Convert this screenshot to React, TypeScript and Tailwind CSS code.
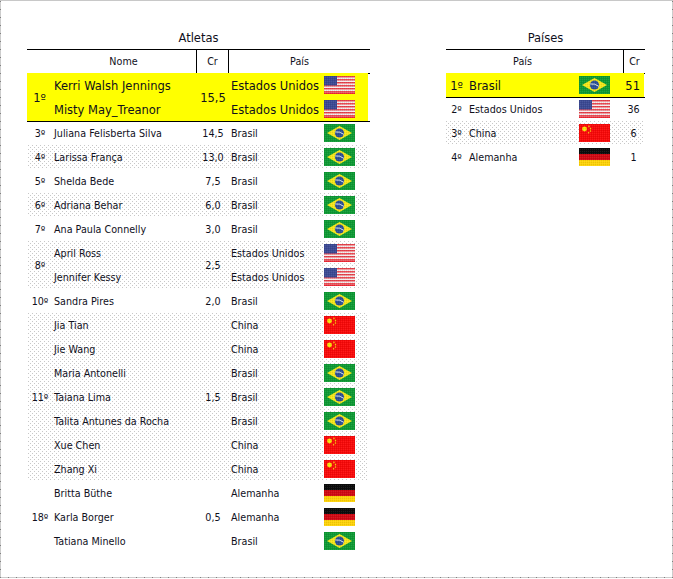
const dots =
  "bg-[conic-gradient(from_270deg_at_1px_1px,#c8c8c8_25%,transparent_0),conic-gradient(from_270deg_at_1px_1px,#c8c8c8_25%,transparent_0)] bg-[length:4px_4px] bg-[position:0_0,2px_2px]";

type Flag = "us" | "br" | "cn" | "de";

function FlagIcon({ code }: { code: Flag }) {
  const dither = (
    <>
      <pattern id={"d-" + code} width="2" height="2" patternUnits="userSpaceOnUse">
        <rect width="1" height="1" fill="#000" fillOpacity="0.08" />
        <rect x="1" y="1" width="1" height="1" fill="#fff" fillOpacity="0.08" />
      </pattern>
      <rect width="31" height="18" fill={`url(#d-${code})`} />
    </>
  );
  if (code === "us") {
    return (
      <svg width="31" height="18" viewBox="0 0 31 18" className="block">
        <rect width="31" height="18" fill="#f4eeee" />
        {[0, 3, 6, 9, 12, 15].map((y) => (
          <rect key={y} y={y} width="31" height="1.5" fill="#e8434c" />
        ))}
        <rect y="16.6" width="31" height="1.4" fill="#e8202c" />
        <rect width="13" height="9.5" fill="#3c4a94" />
        {dither}
      </svg>
    );
  }
  if (code === "br") {
    return (
      <svg width="31" height="18" viewBox="0 0 31 18" className="block">
        <rect width="31" height="18" fill="#0f9a35" />
        <polygon points="15.5,2 28,9 15.5,16 3,9" fill="#f6e71a" />
        <circle cx="15.5" cy="9" r="4.6" fill="#2c4f96" />
        <path d="M11.2 8 Q16 7.2 19.8 10.4" stroke="#dfe6e8" strokeWidth="1" fill="none" />
        {dither}
      </svg>
    );
  }
  if (code === "cn") {
    return (
      <svg width="31" height="18" viewBox="0 0 31 18" className="block">
        <rect width="31" height="18" fill="#f80a0a" />
        <circle cx="5.5" cy="5" r="2.4" fill="#f7e40c" />
        <circle cx="10" cy="2.4" r="0.8" fill="#f5c80c" />
        <circle cx="11.5" cy="4.6" r="0.8" fill="#f5c80c" />
        <circle cx="11.5" cy="7" r="0.8" fill="#f5c80c" />
        <circle cx="9.6" cy="8.8" r="0.8" fill="#f5c80c" />
        {dither}
      </svg>
    );
  }
  return (
    <svg width="31" height="18" viewBox="0 0 31 18" className="block">
      <rect width="31" height="6" fill="#0c0c0c" />
      <rect y="6" width="31" height="6" fill="#d00a14" />
      <rect y="12" width="31" height="6" fill="#fdd20a" />
      {dither}
    </svg>
  );
}

const atletas = [
  { rank: "3º", cr: "14,5", rows: [["Juliana Felisberta Silva", "Brasil", "br"]] },
  { rank: "4º", cr: "13,0", dotted: true, rows: [["Larissa França", "Brasil", "br"]] },
  { rank: "5º", cr: "7,5", rows: [["Shelda Bede", "Brasil", "br"]] },
  { rank: "6º", cr: "6,0", dotted: true, rows: [["Adriana Behar", "Brasil", "br"]] },
  { rank: "7º", cr: "3,0", rows: [["Ana Paula Connelly", "Brasil", "br"]] },
  {
    rank: "8º",
    cr: "2,5",
    dotted: true,
    rows: [
      ["April Ross", "Estados Unidos", "us"],
      ["Jennifer Kessy", "Estados Unidos", "us"],
    ],
  },
  { rank: "10º", cr: "2,0", rows: [["Sandra Pires", "Brasil", "br"]] },
  {
    rank: "11º",
    cr: "1,5",
    dotted: true,
    rows: [
      ["Jia Tian", "China", "cn"],
      ["Jie Wang", "China", "cn"],
      ["Maria Antonelli", "Brasil", "br"],
      ["Taiana Lima", "Brasil", "br"],
      ["Talita Antunes da Rocha", "Brasil", "br"],
      ["Xue Chen", "China", "cn"],
      ["Zhang Xi", "China", "cn"],
    ],
  },
  {
    rank: "18º",
    cr: "0,5",
    rows: [
      ["Britta Büthe", "Alemanha", "de"],
      ["Karla Borger", "Alemanha", "de"],
      ["Tatiana Minello", "Brasil", "br"],
    ],
  },
];

const paises = [
  { rank: "2º", name: "Estados Unidos", flag: "us", cr: "36" },
  { rank: "3º", name: "China", flag: "cn", cr: "6", dotted: true },
  { rank: "4º", name: "Alemanha", flag: "de", cr: "1" },
];

function AtletaGroup({ group, big }: { group: any; big?: boolean }) {
  const n = group.rows.length;
  const nudge = big ? "pt-[3px]" : "pt-[2px]";
  return (
    <div
      className={
        (big ? "grid-cols-[27px_143px_32px_95px_44px] " : "grid-cols-[26px_143px_32px_95px_43px] ") +
        "grid auto-rows-[24px] items-center " +
        (group.dotted ? dots : "")
      }
    >
      <div className={"text-center pr-[2px] " + nudge} style={{ gridRow: `span ${n}` }}>
        {group.rank}
      </div>
      {group.rows.map((r: string[], i: number) => (
        <div key={i} className="contents">
          <div className={"whitespace-nowrap " + nudge} style={{ gridColumn: 2 }}>
            {r[0]}
          </div>
          {i === 0 && (
            <div className={"text-center " + nudge} style={{ gridRow: `span ${n}`, gridColumn: 3 }}>
              {group.cr}
            </div>
          )}
          <div className={"whitespace-nowrap pl-[2px] " + nudge} style={{ gridColumn: 4 }}>
            {r[1]}
          </div>
          <div style={{ gridColumn: 5 }}>
            <FlagIcon code={r[2] as Flag} />
          </div>
        </div>
      ))}
    </div>
  );
}

export default function App() {
  return (
    <div className="w-[673px] h-[578px] bg-white text-[#10101c] font-['DejaVu_Sans',sans-serif] text-[9.6px] overflow-hidden pl-[27px] pt-[28px] bg-no-repeat bg-[linear-gradient(#c8c8c8,#c8c8c8),repeating-linear-gradient(180deg,#cccccc_0_1px,#808080_1px_2px,#cccccc_2px_8px),repeating-linear-gradient(180deg,#cccccc_0_1px,#808080_1px_2px,#cccccc_2px_8px),repeating-linear-gradient(90deg,#808080_0_1px,#cccccc_1px_8px)] bg-[length:100%_1px,1px_100%,1px_100%,100%_1px] bg-[position:0_0,0_0,100%_0,0_100%]">
      <div className="flex">
        {/* Atletas */}
        <div className="w-[343px]">
          <h2 className="h-[21px] text-center text-[11.5px] font-normal leading-[20px]">Atletas</h2>
          <div className="grid grid-cols-[170px_32px_141px] h-[24px] border-t border-black items-center text-center">
            <div className="border-r border-black h-full leading-[23px] pl-[24px]">Nome</div>
            <div className="border-r border-black h-full leading-[23px]">Cr</div>
            <div className="h-full leading-[23px]">País</div>
          </div>
          <div className="h-[49px] border-t border-b border-black">
            <div className="-mt-px w-[341px] h-[48px] bg-[#ffff00] text-[11.5px]">
              <AtletaGroup
                big
                group={{
                  rank: "1º",
                  cr: "15,5",
                  rows: [
                    ["Kerri Walsh Jennings", "Estados Unidos", "us"],
                    ["Misty May_Treanor", "Estados Unidos", "us"],
                  ],
                }}
              />
            </div>
          </div>
          <div className="-mt-px ml-px w-[339px]">
            {atletas.map((g) => (
              <AtletaGroup key={g.rank} group={g} />
            ))}
          </div>
        </div>

        {/* Países */}
        <div className="w-[199px] ml-[76px]">
          <h2 className="h-[21px] text-center text-[11.5px] font-normal leading-[20px]">Países</h2>
          <div className="grid grid-cols-[178px_21px] h-[24px] border-t border-black text-center">
            <div className="border-r border-black leading-[23px] pr-[24px]">País</div>
            <div className="leading-[23px]">Cr</div>
          </div>
          <div className="h-[25px] border-t border-b border-black">
            <div className="-mt-px w-[198px] bg-[#ffff00] text-[11.5px] grid grid-cols-[23px_110px_44px_21px] h-[24px] items-center">
              <div className="text-center pr-[2px] pt-[3px]">1º</div>
              <div className="pt-[3px]">Brasil</div>
              <FlagIcon code="br" />
              <div className="text-right pr-[4px] pt-[3px]">51</div>
            </div>
          </div>
          <div className="-mt-px">
            {paises.map((p) => (
              <div
                key={p.rank}
                className={"w-[198px] grid grid-cols-[23px_110px_44px_21px] h-[24px] items-center " + (p.dotted ? dots : "")}
              >
                <div className="text-center pr-[2px] pt-[2px]">{p.rank}</div>
                <div className="whitespace-nowrap pt-[2px]">{p.name}</div>
                <FlagIcon code={p.flag as Flag} />
                <div className="text-center pt-[2px]">{p.cr}</div>
              </div>
            ))}
          </div>
        </div>
      </div>
    </div>
  );
}
